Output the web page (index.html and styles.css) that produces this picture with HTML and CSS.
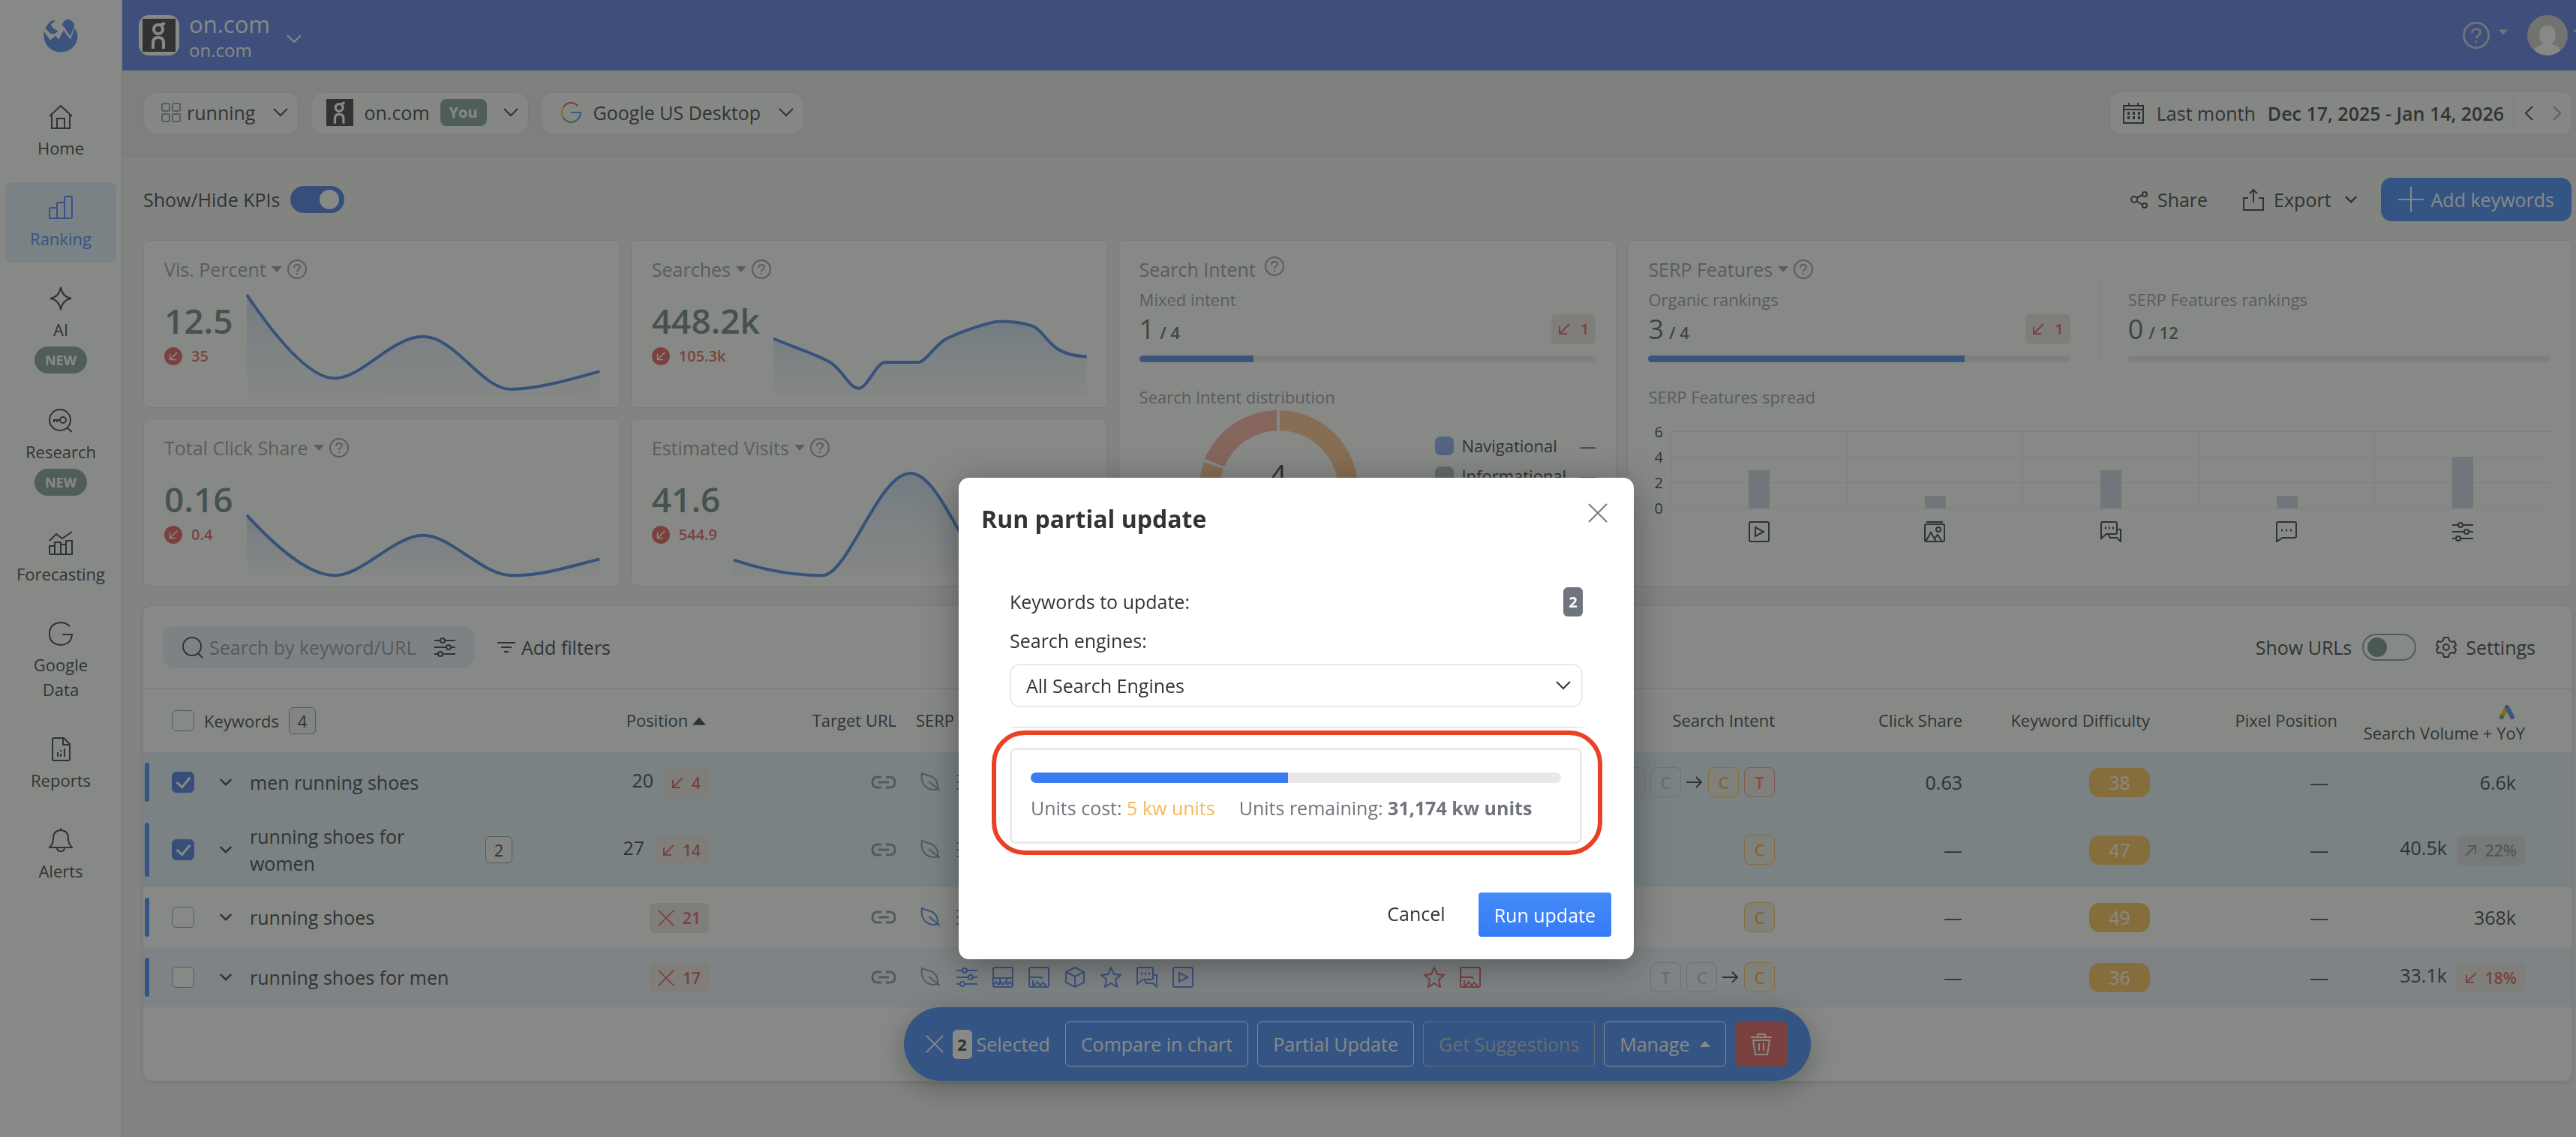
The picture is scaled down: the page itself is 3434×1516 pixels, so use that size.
FILE: index.html
```html
<!DOCTYPE html>
<html lang="en">
<head>
    <meta charset="UTF-8">
    <meta name="viewport" content="width=device-width, initial-scale=1.0">
    <title>Ranking - on.com</title>
    <link rel="stylesheet" href="styles.css">
</head>
<body>
    <!-- icon set -->
    <svg class="sprite" aria-hidden="true">
        <defs>
            <linearGradient id="fade" x1="0" y1="0" x2="0" y2="1">
                <stop offset="0" stop-color="#a9c8e8" stop-opacity="0.6"/>
                <stop offset="1" stop-color="#e4e4ee" stop-opacity="0.2"/>
            </linearGradient>
        </defs>
        <symbol id="i-home" viewBox="0 0 32 32"><path d="M1 15 16 1l15 14M4 13v18h24V13M11 31V18h10v13"/></symbol>
        <symbol id="i-bars" viewBox="0 0 32 32"><path d="M1 30V18q0-2 2-2h8v14zM11 30V11q0-2 2-2h8v21zM21 30V3q0-2 2-2h6q2 0 2 2v25q0 2-2 2zM1 30h22"/></symbol>
        <symbol id="i-spark" viewBox="0 0 32 32"><path d="M16 1Q18 14 30 16 18 18 16 31 14 18 2 16 14 14 16 1z"/></symbol>
        <symbol id="i-research" viewBox="0 0 32 32"><circle cx="15" cy="15" r="14"/><path d="M24 25l7 6M6 15h9M7 15v3M11 15v3"/><circle cx="19" cy="15" r="4"/></symbol>
        <symbol id="i-forecast" viewBox="0 0 32 32"><path d="M1 13 10 4l8 6L31 1M1 31V20h7v11M8 31V15h8v16M16 31V18h7v13M23 31V13h8v18zM1 31h30"/></symbol>
        <symbol id="i-g" viewBox="0 0 32 32"><path d="M28 6Q23 1 16 1 1 2 1 16t15 15q14-1 15-14H18"/></symbol>
        <symbol id="i-report" viewBox="0 0 32 32"><path d="M5 3q0-2 2-2h13l8 8v20q0 2-2 2H7q-2 0-2-2zM19 1v9h9M12 26v-6M16 26v-4M16 19v-2M21 26V15"/></symbol>
        <symbol id="i-bell" viewBox="0 0 32 32"><path d="M1 26q5-5 5-12Q6 3 16 3t10 11q0 7 5 12zM16 3V0M11 26q0 5 5 5t5-5"/></symbol>
        <symbol id="i-down" viewBox="0 0 20 12"><path d="M1 1l9 9 9-9"/></symbol>
        <symbol id="i-caret" viewBox="0 0 14 8"><path d="M0 0h14L7 8z" fill="currentColor" stroke="none"/></symbol>
        <symbol id="i-up" viewBox="0 0 14 8"><path d="M0 8h14L7 0z" fill="currentColor" stroke="none"/></symbol>
        <symbol id="i-help" viewBox="0 0 26 26"><circle cx="13" cy="13" r="12"/><path d="M9 11q0-4 4-4t4 3q0 2-3 4-1 1-1 2M13 18v2"/></symbol>
        <symbol id="i-grid" viewBox="0 0 26 26"><rect x="1" y="1" width="10" height="10" rx="2"/><rect x="15" y="1" width="10" height="10" rx="2"/><rect x="1" y="15" width="10" height="10" rx="2"/><rect x="15" y="15" width="10" height="10" rx="2"/></symbol>
        <symbol id="i-on" viewBox="0 0 44 44"><rect width="44" height="44" fill="#333" stroke="none"/><circle cx="21" cy="14" r="6" stroke-width="4"/><path d="M24 8q4 0 5-3M14 40v-8q0-7 7-7t7 7v8" stroke-width="4"/></symbol>
        <symbol id="i-calendar" viewBox="0 0 30 30"><path d="M2 5h26v23H2zM2 10h26M9 1v5M21 1v5"/><path d="M7 15h3M14 15h3M21 15h3M7 21h3M14 21h3M21 21h3" stroke-width="4"/></symbol>
        <symbol id="i-prev" viewBox="0 0 12 20"><path d="M11 1l-9 9 9 9"/></symbol>
        <symbol id="i-next" viewBox="0 0 12 20"><path d="M1 1l9 9-9 9"/></symbol>
        <symbol id="i-share" viewBox="0 0 24 24"><circle cx="5" cy="12" r="4"/><circle cx="19" cy="5" r="3"/><circle cx="19" cy="20" r="3"/><path d="M8 10l8-4M8 14l8 5"/></symbol>
        <symbol id="i-export" viewBox="0 0 30 30"><path d="M8 13H2v16h26V13h-6M15 19V2M10 7l5-5 5 5"/></symbol>
        <symbol id="i-plus" viewBox="0 0 34 34"><path d="M17 0v34M0 17h34"/></symbol>
        <symbol id="i-search" viewBox="0 0 28 28"><circle cx="13" cy="13" r="12"/><path d="M21 22l6 6"/></symbol>
        <symbol id="i-sliders" viewBox="0 0 28 28"><path d="M0 5h8M14 5h14M0 14h16M22 14h6M0 23h5M11 23h17"/><circle cx="11" cy="5" r="3"/><circle cx="19" cy="14" r="3"/><circle cx="8" cy="23" r="3"/></symbol>
        <symbol id="i-filter" viewBox="0 0 24 16"><path d="M0 2h24M5 8h14M9 14h6"/></symbol>
        <symbol id="i-gear" viewBox="0 0 28 28"><path d="M11 1h6l1 4 3 2 4-1 2 5-3 3 3 3-2 5-4-1-3 2-1 4h-6l-1-4-3-2-4 1-2-5 3-3-3-3 2-5 4 1 3-2z"/><circle cx="14" cy="14" r="4"/></symbol>
        <symbol id="i-downleft" viewBox="0 0 16 16"><path d="M15 1L3 13M2 4v10h10"/></symbol>
        <symbol id="i-upright" viewBox="0 0 16 16"><path d="M1 15L13 3M4 2h10v10"/></symbol>
        <symbol id="i-x" viewBox="0 0 26 26"><path d="M1 1l24 24M25 1L1 25"/></symbol>
        <symbol id="i-arrow" viewBox="0 0 22 18"><path d="M0 9h20M13 2l7 7-7 7"/></symbol>
        <symbol id="i-link" viewBox="0 0 34 18"><path d="M14 2H9Q2 2 2 9t7 7h5M20 2h5q7 0 7 7t-7 7h-5M10 9h14"/></symbol>
        <symbol id="i-leaf" viewBox="0 0 28 28"><path d="M2 2q4 2 12 4 10 4 9 17-10 3-17-4Q0 12 2 2zM11 13l15 12"/></symbol>
        <symbol id="i-images" viewBox="0 0 28 28"><rect x="1" y="1" width="26" height="26" rx="2"/><path d="M1 15h26M10 15v9M19 15v9M2 24l3-4 3 4 3-4 3 4 3-4 3 4 3-4 3 4"/></symbol>
        <symbol id="i-thumb" viewBox="0 0 28 28"><rect x="1" y="1" width="26" height="26" rx="2"/><path d="M1 14h15q2 0 2 2M6 26v-8M7 26l5-6 4 5 3-4 5 5"/></symbol>
        <symbol id="i-box" viewBox="0 0 28 28"><path d="M14 1l12 6v14l-12 6-12-6V7zM2 7l12 6 12-6M14 13v14"/></symbol>
        <symbol id="i-star" viewBox="0 0 28 28"><path d="M14 1l4 9 9 1-7 6 2 10-8-5-8 5 2-10-7-6 9-1z"/></symbol>
        <symbol id="i-chats" viewBox="0 0 28 28"><path d="M1 3q0-2 2-2h17q2 0 2 2v12q0 2-2 2H8l-7 6zM22 11h5v16l-5-5h-9l-2-4"/><path d="M6 9h2M11 9h2M16 9h2" stroke-width="3"/></symbol>
        <symbol id="i-chat" viewBox="0 0 28 28"><path d="M1 3q0-2 2-2h22q2 0 2 2v17q0 2-2 2H9l-8 5z"/><path d="M7 12h2M13 12h2M19 12h2" stroke-width="3"/></symbol>
        <symbol id="i-play" viewBox="0 0 28 28"><rect x="1" y="1" width="26" height="26" rx="2"/><path d="M9 8v12l11-6z"/></symbol>
        <symbol id="i-photo" viewBox="0 0 28 28"><rect x="1" y="4" width="26" height="23" rx="2"/><path d="M3 1h22M2 27l7-12 7 12M14 23l4-5 6 9"/><circle cx="19" cy="11" r="3"/></symbol>
        <symbol id="i-trash" viewBox="0 0 28 30"><path d="M0 6h28M9 6V2h10v4M3 10l3 19h16l3-19zM11 14v10M17 14v10"/></symbol>
    </svg>

    <div class="app">
        <nav class="sidebar">
            <a href="#" class="logo" aria-label="Home">
                <svg width="46" height="46" viewBox="0 0 46 46"><path d="M0 16l4 6 5 7 7-6 4 5 7-13 4 7 5 6 5-16q5 6 5 12a23 22 0 0 1-46 0z"/><path d="M24 10q2-7 8-9 8 2 10 9l-6 15-4-5-5-8zM2 14Q5 6 13 2l3 2-6 5 4 5 6 3-4 4-6 1z"/></svg>
            </a>
            <a href="#" class="side-item"><svg><use href="#i-home"/></svg>Home</a>
            <a href="#" class="side-item active"><svg><use href="#i-bars"/></svg>Ranking</a>
            <a href="#" class="side-item"><svg><use href="#i-spark"/></svg>AI<span class="new">NEW</span></a>
            <a href="#" class="side-item"><svg><use href="#i-research"/></svg>Research<span class="new">NEW</span></a>
            <a href="#" class="side-item"><svg><use href="#i-forecast"/></svg>Forecasting</a>
            <a href="#" class="side-item"><svg><use href="#i-g"/></svg>Google<br>Data</a>
            <a href="#" class="side-item"><svg><use href="#i-report"/></svg>Reports</a>
            <a href="#" class="side-item"><svg><use href="#i-bell"/></svg>Alerts</a>
        </nav>

        <div class="page">
            <header class="topbar">
                <span class="site-logo"><svg width="44" height="44"><use href="#i-on"/></svg></span>
                <div class="site">
                    <div class="site-name">on.com</div>
                    <div class="site-url">on.com</div>
                </div>
                <svg class="chev"><use href="#i-down"/></svg>
                <div class="account">
                    <svg width="36" height="36"><use href="#i-help"/></svg>
                    <svg class="caret"><use href="#i-caret"/></svg>
                    <svg class="avatar" viewBox="0 0 54 54"><circle cx="27" cy="27" r="27" fill="#ccc8c8"/><path d="M27 14c14 0 13 20 5 25 8 2 11 4 12 8-10 9-24 9-34 0 1-4 4-6 12-8-8-5-9-25 5-25z" fill="#fff"/></svg>
                    <svg class="caret"><use href="#i-caret"/></svg>
                </div>
            </header>

            <div class="filterbar">
                <button class="pill"><svg class="muted" width="26" height="26"><use href="#i-grid"/></svg><span class="group">running</span><svg class="chev"><use href="#i-down"/></svg></button>
                <button class="pill domain"><svg class="white" width="36" height="36"><use href="#i-on"/></svg><span>on.com</span><span class="you">You</span><svg class="chev"><use href="#i-down"/></svg></button>
                <button class="pill engine"><svg width="32" height="32" viewBox="0 0 32 32" stroke-width="6"><path d="M6 9Q10 3 16 3q5 0 9 4" stroke="#ea4335"/><path d="M6 9q-4 7 0 14" stroke="#fbbc05"/><path d="M6 23q4 6 10 6 5 0 8-3" stroke="#34a853"/><path d="M16 16h13q0 6-5 10" stroke="#4285f4"/></svg><span>Google US Desktop</span><svg class="chev"><use href="#i-down"/></svg></button>
                <div class="dates">
                    <button class="range"><svg width="30" height="30"><use href="#i-calendar"/></svg><span>Last month</span><b>Dec 17, 2025 - Jan 14, 2026</b></button>
                    <button class="step" aria-label="Previous"><svg width="12" height="20"><use href="#i-prev"/></svg></button>
                    <button class="step muted" aria-label="Next"><svg width="12" height="20"><use href="#i-next"/></svg></button>
                </div>
            </div>

            <main>
                <div class="toolbar">
                    <label for="kpis">Show/Hide KPIs</label>
                    <input type="checkbox" class="switch" id="kpis" checked>
                    <div class="actions">
                        <button class="plain"><svg width="24" height="24"><use href="#i-share"/></svg>Share</button>
                        <button class="plain"><svg width="30" height="30"><use href="#i-export"/></svg>Export<svg class="chev small"><use href="#i-down"/></svg></button>
                        <button class="add"><svg width="34" height="34"><use href="#i-plus"/></svg>Add keywords</button>
                    </div>
                </div>

                <section class="kpis">
                    <article class="card kpi">
                        <h2>Vis. Percent <svg class="caret"><use href="#i-caret"/></svg><svg class="help"><use href="#i-help"/></svg></h2>
                        <div class="kpi-body">
                            <div><div class="value">12.5</div><div class="trend"><i><svg><use href="#i-downleft"/></svg></i>35</div></div>
                            <svg class="spark" viewBox="0 0 1050 412" preserveAspectRatio="none">
                                <path class="area" d="M0 0C70 140 180 335 262 335S430 168 525 168 700 379 785 379C860 379 950 345 1050 307V412H0z"/>
                                <path class="line" d="M0 0C70 140 180 335 262 335S430 168 525 168 700 379 785 379C860 379 950 345 1050 307"/>
                            </svg>
                        </div>
                    </article>
                    <article class="card kpi">
                        <h2>Searches <svg class="caret"><use href="#i-caret"/></svg><svg class="help"><use href="#i-help"/></svg></h2>
                        <div class="kpi-body">
                            <div><div class="value">448.2k</div><div class="trend"><i><svg><use href="#i-downleft"/></svg></i>105.3k</div></div>
                            <svg class="spark" viewBox="0 0 932 412" preserveAspectRatio="none">
                                <path class="area" d="M0 176C70 215 130 240 168 270S225 375 253 375 305 271 333 271H433C455 265 480 205 508 182S640 107 678 107 750 115 773 127 815 190 843 215 900 245 932 248V412H0z"/>
                                <path class="line" d="M0 176C70 215 130 240 168 270S225 375 253 375 305 271 333 271H433C455 265 480 205 508 182S640 107 678 107 750 115 773 127 815 190 843 215 900 245 932 248"/>
                            </svg>
                        </div>
                    </article>
                    <article class="card kpi">
                        <h2>Total Click Share <svg class="caret"><use href="#i-caret"/></svg><svg class="help"><use href="#i-help"/></svg></h2>
                        <div class="kpi-body">
                            <div><div class="value">0.16</div><div class="trend"><i><svg><use href="#i-downleft"/></svg></i>0.4</div></div>
                            <svg class="spark" viewBox="0 0 1050 412" preserveAspectRatio="none">
                                <path class="area" d="M0 168C80 285 180 410 262 410S440 249 525 249 700 410 790 410 960 375 1050 344V412H0z"/>
                                <path class="line" d="M0 168C80 285 180 410 262 410S440 249 525 249 700 410 790 410 960 375 1050 344"/>
                            </svg>
                        </div>
                    </article>
                    <article class="card kpi">
                        <h2>Estimated Visits <svg class="caret"><use href="#i-caret"/></svg><svg class="help"><use href="#i-help"/></svg></h2>
                        <div class="kpi-body">
                            <div><div class="value">41.6</div><div class="trend"><i><svg><use href="#i-downleft"/></svg></i>544.9</div></div>
                            <svg class="spark" viewBox="0 0 1050 412" preserveAspectRatio="none">
                                <path class="area" d="M0 348Q140 410 262 410C340 415 430 0 526 0S700 410 790 410 960 375 1050 360V412H0z"/>
                                <path class="line" d="M0 348Q140 410 262 410C340 415 430 0 526 0S700 410 790 410 960 375 1050 360"/>
                            </svg>
                        </div>
                    </article>

                    <article class="card tall intent">
                        <h2>Search Intent <svg class="help"><use href="#i-help"/></svg></h2>
                        <h3>Mixed intent</h3>
                        <div class="ratio"><span>1</span> / 4<span class="delta"><svg><use href="#i-downleft"/></svg>1</span></div>
                        <div class="bar"><div style="width: 25%"></div></div>
                        <h3 class="second">Search Intent distribution</h3>
                        <div class="distribution">
                            <svg class="donut" width="214" height="214" viewBox="0 0 214 214">
                                <path d="M109 1A106 106 0 1 1 8 70L34 79A79 79 0 1 0 109 28z" fill="#fcbf85"/>
                                <path d="M105 1v27A79 79 0 0 0 35 76L9 66A106 106 0 0 1 105 1z" fill="#fbaa98"/>
                                <text x="107" y="103" text-anchor="middle">4</text>
                            </svg>
                            <ul class="legend">
                                <li><i class="nav"></i>Navigational<span>—</span></li>
                                <li><i class="info"></i>Informational<span>—</span></li>
                                <li><i class="com"></i>Commercial<span>4</span></li>
                                <li><i class="tra"></i>Transactional<span>1</span></li>
                            </ul>
                        </div>
                    </article>

                    <article class="card tall serp">
                        <h2>SERP Features <svg class="caret"><use href="#i-caret"/></svg><svg class="help"><use href="#i-help"/></svg></h2>
                        <div class="rankings">
                            <div>
                                <h3>Organic rankings</h3>
                                <div class="ratio"><span>3</span> / 4<span class="delta"><svg><use href="#i-downleft"/></svg>1</span></div>
                                <div class="bar"><div style="width: 75%"></div></div>
                            </div>
                            <div>
                                <h3>SERP Features rankings</h3>
                                <div class="ratio"><span>0</span> / 12</div>
                                <div class="bar"></div>
                            </div>
                        </div>
                        <h3 class="second">SERP Features spread</h3>
                        <div class="chart">
                            <div class="y-axis"><span>6</span><span>4</span><span>2</span><span>0</span></div>
                            <div class="plot">
                                <div><i style="height: 50%"></i></div>
                                <div><i style="height: 17%"></i></div>
                                <div><i style="height: 50%"></i></div>
                                <div><i style="height: 17%"></i></div>
                                <div><i style="height: 67%"></i></div>
                            </div>
                            <div class="x-axis">
                                <svg><use href="#i-play"/></svg>
                                <svg><use href="#i-photo"/></svg>
                                <svg><use href="#i-chats"/></svg>
                                <svg><use href="#i-chat"/></svg>
                                <svg><use href="#i-sliders"/></svg>
                            </div>
                        </div>
                    </article>
                </section>

                <section class="keywords">
                    <div class="table-tools">
                        <div class="search">
                            <svg><use href="#i-search"/></svg>
                            <input type="text" placeholder="Search by keyword/URL" aria-label="Search by keyword/URL">
                            <svg><use href="#i-sliders"/></svg>
                        </div>
                        <button class="plain filters"><svg width="24" height="16"><use href="#i-filter"/></svg>Add filters</button>
                        <div class="table-options">
                            <label for="urls">Show URLs</label>
                            <input type="checkbox" class="switch" id="urls">
                            <button class="plain settings"><svg width="28" height="28"><use href="#i-gear"/></svg>Settings</button>
                        </div>
                    </div>

                    <table>
                        <colgroup>
                            <col class="c-key"><col class="c-num"><col class="c-num"><col><col class="c-num"><col class="c-num"><col class="c-num"><col class="c-num"><col class="c-num"><col class="c-num"><col class="c-end">
                        </colgroup>
                        <thead>
                            <tr>
                                <th class="key"><div><input type="checkbox" class="tick" aria-label="Select all">Keywords<span class="count">4</span></div></th>
                                <th>Position <svg class="sort"><use href="#i-up"/></svg></th>
                                <th>Target URL</th>
                                <th class="left">SERP Features</th>
                                <th></th>
                                <th>Search Intent</th>
                                <th>Click Share</th>
                                <th>Keyword Difficulty</th>
                                <th>Pixel Position</th>
                                <th class="volume"><svg width="22" height="20" viewBox="0 0 22 20"><path d="M11 3L4 16" stroke="#fbbc04" stroke-width="6"/><path d="M11 3l7 13" stroke="#4a80f0" stroke-width="6" stroke-linecap="round"/><circle cx="4" cy="16" r="3" fill="#4d9a73" stroke="none"/></svg><br>Search Volume + YoY</th>
                                <th></th>
                            </tr>
                        </thead>
                        <tbody>
                            <tr class="selected">
                                <td class="key"><div><input type="checkbox" class="tick" aria-label="men running shoes" checked><svg class="chev small"><use href="#i-down"/></svg><span class="name">men running shoes</span></div></td>
                                <td>20<span class="delta"><svg><use href="#i-downleft"/></svg>4</span></td>
                                <td><svg class="link"><use href="#i-link"/></svg></td>
                                <td><div class="icons"><svg class="muted"><use href="#i-leaf"/></svg><svg><use href="#i-sliders"/></svg><svg><use href="#i-images"/></svg><svg><use href="#i-box"/></svg></div></td>
                                <td></td>
                                <td><div class="chips"><i>T</i><i>C</i><svg><use href="#i-arrow"/></svg><i class="c">C</i><i class="t">T</i></div></td>
                                <td>0.63</td>
                                <td><span class="kd">38</span></td>
                                <td class="dash">—</td>
                                <td class="vol">6.6k</td>
                                <td></td>
                            </tr>
                            <tr class="selected tall-row">
                                <td class="key"><div><input type="checkbox" class="tick" aria-label="running shoes for women" checked><svg class="chev small"><use href="#i-down"/></svg><span class="name">running shoes for women</span><span class="count">2</span></div></td>
                                <td>27<span class="delta"><svg><use href="#i-downleft"/></svg>14</span></td>
                                <td><svg class="link"><use href="#i-link"/></svg></td>
                                <td><div class="icons"><svg class="muted"><use href="#i-leaf"/></svg><svg><use href="#i-sliders"/></svg><svg><use href="#i-images"/></svg><svg><use href="#i-box"/></svg></div></td>
                                <td></td>
                                <td><div class="chips"><i class="c">C</i></div></td>
                                <td>—</td>
                                <td><span class="kd">47</span></td>
                                <td class="dash">—</td>
                                <td>40.5k<span class="delta up"><svg><use href="#i-upright"/></svg>22%</span></td>
                                <td></td>
                            </tr>
                            <tr>
                                <td class="key"><div><input type="checkbox" class="tick" aria-label="running shoes"><svg class="chev small"><use href="#i-down"/></svg><span class="name">running shoes</span></div></td>
                                <td><span class="delta lost"><svg><use href="#i-x"/></svg>21</span></td>
                                <td><svg class="link"><use href="#i-link"/></svg></td>
                                <td><div class="icons"><svg><use href="#i-leaf"/></svg><svg><use href="#i-sliders"/></svg><svg><use href="#i-images"/></svg><svg><use href="#i-box"/></svg></div></td>
                                <td></td>
                                <td><div class="chips"><i class="c">C</i></div></td>
                                <td>—</td>
                                <td><span class="kd">49</span></td>
                                <td class="dash">—</td>
                                <td class="vol">368k</td>
                                <td></td>
                            </tr>
                            <tr class="even">
                                <td class="key"><div><input type="checkbox" class="tick" aria-label="running shoes for men"><svg class="chev small"><use href="#i-down"/></svg><span class="name">running shoes for men</span></div></td>
                                <td><span class="delta lost"><svg><use href="#i-x"/></svg>17</span></td>
                                <td><svg class="link"><use href="#i-link"/></svg></td>
                                <td><div class="icons"><svg class="muted"><use href="#i-leaf"/></svg><svg><use href="#i-sliders"/></svg><svg><use href="#i-images"/></svg><svg><use href="#i-thumb"/></svg><svg><use href="#i-box"/></svg><svg><use href="#i-star"/></svg><svg><use href="#i-chats"/></svg><svg><use href="#i-play"/></svg></div></td>
                                <td><div class="icons red"><svg><use href="#i-star"/></svg><svg><use href="#i-thumb"/></svg></div></td>
                                <td><div class="chips"><i>T</i><i>C</i><svg><use href="#i-arrow"/></svg><i class="c">C</i></div></td>
                                <td>—</td>
                                <td><span class="kd">36</span></td>
                                <td class="dash">—</td>
                                <td>33.1k<span class="delta"><svg><use href="#i-downleft"/></svg>18%</span></td>
                                <td></td>
                            </tr>
                        </tbody>
                    </table>

                    <div class="bulk">
                        <button class="clear" aria-label="Clear selection"><svg width="24" height="24"><use href="#i-x"/></svg></button>
                        <span class="picked">2</span>
                        <span class="label">Selected</span>
                        <button>Compare in chart</button>
                        <button>Partial Update</button>
                        <button class="off" disabled>Get Suggestions</button>
                        <button>Manage <svg class="caret"><use href="#i-up"/></svg></button>
                        <button class="trash" aria-label="Delete"><svg width="28" height="30"><use href="#i-trash"/></svg></button>
                    </div>
                </section>
            </main>
        </div>
    </div>

    <div class="overlay">
        <div class="modal" role="dialog" aria-labelledby="modal-title">
            <div class="modal-head">
                <h1 id="modal-title">Run partial update</h1>
                <button class="close" aria-label="Close"><svg width="26" height="26"><use href="#i-x"/></svg></button>
            </div>
            <div class="modal-body">
                <div class="field">Keywords to update:<span class="num">2</span></div>
                <label class="field" for="engines">Search engines:</label>
                <div class="select">
                    <select id="engines"><option>All Search Engines</option></select>
                    <svg class="chev"><use href="#i-down"/></svg>
                </div>
            </div>
            <div class="highlight">
                <div class="units">
                    <div class="progress"><div style="width: 48.5%"></div></div>
                    <div class="units-text">
                        <span>Units cost: <em>5 kw units</em></span>
                        <span>Units remaining: <b>31,174 kw units</b></span>
                    </div>
                </div>
            </div>
            <div class="modal-foot">
                <button class="cancel">Cancel</button>
                <button class="run">Run update</button>
            </div>
        </div>
    </div>
</body>
</html>
```

FILE: styles.css
```css
:root {
    --blue: #3b82f6;
    --text: #313337;
    --muted: #9494a0;
    --green: #647d76;
    --badge: #7b9a92;
    --red: #df5555;
    --amber: #fcbc4c;
    --line: #dcdde0;
}

* {
    box-sizing: border-box;
}

body {
    margin: 0;
    background: #f3f3f3;
    color: var(--text);
    font-family: "Open Sans", "Noto Sans", sans-serif;
    font-size: 25px;
    line-height: 36px;
}

h1, h2, h3, ul {
    margin: 0;
    padding: 0;
    list-style: none;
}

a {
    color: inherit;
    text-decoration: none;
}

button, input, select {
    font: inherit;
    color: inherit;
    margin: 0;
}

button {
    display: flex;
    align-items: center;
    border: none;
    background: none;
    padding: 0;
    white-space: nowrap;
}

svg {
    display: block;
    flex-shrink: 0;
    fill: none;
    stroke: currentColor;
    stroke-width: 2;
}

.sprite {
    position: absolute;
    width: 0;
    height: 0;
}

.chev {
    width: 20px;
    height: 12px;
}

.chev.small {
    width: 16px;
    height: 12px;
    stroke-width: 3;
}

.caret {
    width: 14px;
    height: 8px;
}

.muted {
    color: #8f9aa0;
}

.white {
    color: #fff;
}

.app {
    display: flex;
    min-height: 100vh;
}

/* sidebar */
.sidebar {
    width: 163px;
    flex-shrink: 0;
    padding: 24px 7px;
    background: #fff;
    border-right: 1px solid var(--line);
}

.logo {
    display: flex;
    justify-content: center;
    height: 98px;
    color: #4a80e8;
}

.logo svg {
    fill: currentColor;
    stroke: #fff;
    stroke-width: 1;
}

.side-item {
    display: flex;
    flex-direction: column;
    align-items: center;
    margin-bottom: 14px;
    padding: 18px 0 15px;
    border-radius: 8px;
    font-size: 22px;
    line-height: 33px;
    text-align: center;
}

.side-item svg {
    width: 32px;
    height: 32px;
    margin-bottom: 9px;
}

.side-item.active {
    background: #dfeffa;
    color: var(--blue);
}

.new {
    margin-top: 6px;
    padding: 0 14px;
    border-radius: 18px;
    background: var(--badge);
    color: #fff;
    font-size: 18px;
    font-weight: 700;
    line-height: 36px;
}

.page {
    flex: 1;
    min-width: 0;
}

/* top bar */
.topbar {
    display: flex;
    align-items: center;
    height: 94px;
    padding-left: 22px;
    overflow: hidden;
    background: #4f76e0;
    color: #fff;
}

.site-logo {
    display: flex;
    align-items: center;
    justify-content: center;
    width: 54px;
    height: 54px;
    margin-right: 13px;
    border-radius: 14px;
    background: #fff;
}

.site {
    margin-right: 22px;
    padding-top: 4px;
}

.site-name {
    font-size: 31px;
    line-height: 36px;
}

.site-url {
    font-size: 24px;
    line-height: 34px;
}

.topbar > .chev {
    margin-top: 10px;
}

.account {
    display: flex;
    align-items: center;
    margin-left: auto;
    margin-right: -8px;
    color: #c9cfdc;
}

.account .caret {
    width: 12px;
    margin: 0 26px 8px 12px;
}

.account .avatar {
    width: 54px;
    height: 54px;
    stroke: none;
}

.account .avatar + .caret {
    margin: 0 0 8px 7px;
}

/* filter bar */
.filterbar {
    display: flex;
    align-items: center;
    gap: 16px;
    height: 116px;
    padding: 0 5px 2px 28px;
    background: #e9e9e9;
    border-bottom: 1px solid #dedede;
}

.pill {
    height: 56px;
    padding: 0 13px 2px 23px;
    border: 1px solid #dedfe0;
    border-radius: 16px;
    background: #fbfbfb;
    font-weight: 500;
}

.pill .chev {
    margin-left: 24px;
}

.group {
    margin-left: 8px;
}

.domain {
    padding-left: 20px;
    gap: 14px;
}

.domain .chev {
    margin-left: 8px;
}

.engine span {
    margin-left: 14px;
}

.you {
    padding: 0 12px;
    border-radius: 8px;
    background: var(--badge);
    color: #fff;
    font-size: 20px;
    font-weight: 700;
}

.dates {
    display: flex;
    margin-left: auto;
    height: 58px;
    border: 1px solid #dedfe0;
    border-radius: 14px;
    background: #fbfbfb;
}

.range {
    padding: 0 13px 0 16px;
    border-right: 1px solid #dedfe0;
    gap: 16px;
}

.range b {
    font-weight: 600;
}

.step {
    width: 38px;
    justify-content: center;
}

/* content */
main {
    padding: 28px 6px 0 28px;
}

.toolbar {
    display: flex;
    align-items: center;
    height: 56px;
    margin-bottom: 26px;
}

.switch {
    appearance: none;
    width: 72px;
    height: 36px;
    margin-left: 14px;
    padding: 5px;
    border: 2px solid #7d9590;
    border-radius: 18px;
}

.switch::before {
    content: "";
    display: block;
    width: 26px;
    height: 26px;
    margin-top: -2px;
    border-radius: 50%;
    background: #6f8a86;
}

.switch:checked {
    border-color: #3f74dd;
    background: #3f74dd;
}

.switch:checked::before {
    margin-left: 32px;
    background: #fff;
}

.actions {
    display: flex;
    align-items: center;
    margin-left: auto;
}

.plain {
    gap: 12px;
    margin-right: 46px;
}

.plain + .plain {
    margin-right: 32px;
}

.plain .chev {
    margin-left: 6px;
}

.add {
    height: 58px;
    padding: 0 23px;
    gap: 10px;
    border-radius: 14px;
    background: var(--blue);
    color: #fff;
}

/* kpi cards */
.kpis {
    display: grid;
    grid-template-columns: 636fr 636fr 665fr 1259fr;
    grid-template-rows: 224px 224px;
    gap: 14px;
}

.card {
    border: 1px solid var(--line);
    border-radius: 8px;
    background: #fff;
    padding: 19px 27px 12px;
}

.kpi:nth-child(3) {
    grid-area: 2 / 1;
}

.kpi:nth-child(4) {
    grid-area: 2 / 2;
}

.intent {
    grid-area: 1 / 3 / 3;
}

.serp {
    grid-area: 1 / 4 / 3;
}

h2 {
    display: flex;
    align-items: center;
    color: var(--muted);
    font-size: 25px;
    font-weight: 500;
    line-height: 38px;
}

h2 .caret {
    margin: 0 7px;
}

h2 .help {
    width: 26px;
    height: 26px;
}

.intent h2 .help {
    margin: 0 0 8px 12px;
}

h3 {
    margin-top: 6px;
    color: var(--muted);
    font-size: 22px;
    font-weight: 500;
    line-height: 30px;
}

h3.second {
    margin-top: 31px;
}

.kpi-body {
    display: flex;
    gap: 18px;
}

.value {
    margin-top: 23px;
    color: var(--green);
    font-size: 46px;
    font-weight: 600;
    line-height: 52px;
}

.trend {
    display: flex;
    align-items: center;
    gap: 12px;
    margin-top: 10px;
    color: var(--red);
    font-size: 20px;
    font-weight: 600;
    line-height: 24px;
}

.trend i {
    padding: 6px;
    border-radius: 50%;
    background: var(--red);
    color: #fff;
}

.trend svg {
    width: 12px;
    height: 12px;
}

.spark {
    flex: 1;
    width: 0;
    height: 137px;
    margin-top: 15px;
    overflow: visible;
}

.spark .line {
    stroke: #3f7ae0;
    stroke-width: 4;
    vector-effect: non-scaling-stroke;
}

.spark .area {
    fill: url(#fade);
    stroke: none;
}

.ratio {
    display: flex;
    align-items: baseline;
    gap: 7px;
    height: 44px;
    margin-top: 3px;
    color: #4f635b;
    font-size: 22px;
    font-weight: 600;
    line-height: 44px;
}

.ratio > span:first-child {
    font-size: 36px;
    font-weight: 400;
}

.delta {
    display: inline-flex;
    align-items: center;
    gap: 11px;
    margin-left: 13px;
    padding: 0 11px;
    border-radius: 6px;
    background: #ede4e2;
    color: var(--red);
    font-size: 21px;
    font-weight: 600;
    line-height: 40px;
    vertical-align: middle;
}

.delta svg {
    width: 16px;
    height: 16px;
}

.delta.lost svg {
    width: 22px;
    height: 22px;
}

.delta.up {
    background: #dcdce0;
    color: #7d908c;
}

.ratio .delta {
    align-self: center;
    margin-left: auto;
    font-size: 20px;
    gap: 14px;
    padding: 0 9px;
}

.bar {
    height: 9px;
    margin-top: 13px;
    overflow: hidden;
    border-radius: 5px;
    background: #e9e9e9;
}

.bar div {
    height: 100%;
    background: #4a84e8;
}

.distribution {
    display: flex;
    justify-content: space-between;
    padding-left: 78px;
}

.donut {
    margin-top: 2px;
    stroke: none;
}

.donut text {
    fill: var(--text);
    font-size: 40px;
}

.legend {
    width: 214px;
    margin-top: 30px;
    font-size: 22px;
    line-height: 40px;
}

.legend li {
    display: flex;
    align-items: center;
}

.legend i {
    width: 25px;
    height: 25px;
    margin-right: 10px;
    border-radius: 7px;
    background: #85a9f5;
}

.legend .info {
    background: #aab8b4;
}

.legend .com {
    background: #fcbf85;
}

.legend .tra {
    background: #fbaa98;
}

.legend span {
    margin-left: auto;
}

.rankings {
    display: grid;
    grid-template-columns: 1fr 1fr;
}

.rankings > div:first-child {
    padding-right: 38px;
    border-right: 1px solid var(--line);
}

.rankings > div:last-child {
    padding-left: 38px;
}

/* bar chart of serp features */
.chart {
    display: grid;
    grid-template-columns: 30px 1fr;
    margin-top: 15px;
}

.y-axis {
    display: flex;
    flex-direction: column;
    padding-left: 8px;
    font-size: 20px;
    font-weight: 500;
    line-height: 34px;
}

.plot {
    display: grid;
    grid-template-columns: repeat(5, 1fr);
    height: 103px;
    margin-top: 16px;
    background: repeating-linear-gradient(to bottom, #eaeaec 0 1px, transparent 1px 34px);
}

.plot div {
    display: flex;
    align-items: flex-end;
    justify-content: center;
    border-left: 1px solid #eaeaec;
}

.plot i {
    width: 28px;
    background: #ccd2e2;
}

.x-axis {
    display: grid;
    grid-column: 2;
    grid-template-columns: repeat(5, 1fr);
    justify-items: center;
}

.x-axis svg {
    width: 28px;
    height: 28px;
}

/* keyword table */
.keywords {
    margin-top: 26px;
    border-radius: 10px;
    background: #fff;
    box-shadow: 0 2px 8px rgba(0, 0, 0, 0.15);
}

.table-tools {
    display: flex;
    align-items: center;
    height: 111px;
    padding: 0 48px 0 26px;
    border-bottom: 2px solid #e9eaec;
}

.search {
    display: flex;
    align-items: center;
    width: 416px;
    height: 56px;
    padding: 0 26px;
    border-radius: 16px;
    background: #e9effa;
}

.search svg {
    width: 28px;
    height: 28px;
}

.search input {
    flex: 1;
    min-width: 0;
    padding: 0 0 0 8px;
    border: none;
    background: none;
    outline: none;
}

.search input::placeholder {
    color: #84928f;
    opacity: 1;
}

.filters {
    gap: 8px;
    margin-left: 30px;
}

.table-options {
    display: flex;
    align-items: center;
    margin-left: auto;
}

.settings {
    margin: 0 0 0 26px;
}

table {
    width: 100%;
    table-layout: fixed;
    border-collapse: collapse;
}

.c-key {
    width: 517px;
}

.c-num {
    width: 250px;
}

.c-end {
    width: 49px;
}

th {
    height: 84px;
    padding: 0 13px 2px;
    font-size: 22px;
    font-weight: 500;
    line-height: 32px;
    text-align: right;
    white-space: nowrap;
}

th.left {
    text-align: left;
}

th.volume {
    padding-top: 8px;
    line-height: 26px;
}

.volume svg {
    display: inline-block;
    margin-right: 13px;
}

.sort {
    display: inline-block;
    width: 18px;
    height: 11px;
    margin-right: 4px;
    vertical-align: 2px;
}

td {
    height: 80px;
    padding: 0 13px;
    text-align: right;
    white-space: nowrap;
}

.tall-row td {
    height: 100px;
}

.selected {
    background: #dfeef7;
}

.even {
    background: #ebf1fa;
}

.key {
    padding: 0 25px 0 2px;
}

/* lets the blue marker fill the row height */
td.key div {
    position: relative;
    display: flex;
    align-items: center;
    height: 80px;
    padding-left: 36px;
    text-align: left;
}

.tall-row td.key div {
    height: 100px;
}

td.key div::before {
    content: "";
    position: absolute;
    left: 0;
    top: 14px;
    bottom: 14px;
    width: 6px;
    border-radius: 3px;
    background: var(--blue);
}

th.key div {
    display: flex;
    align-items: center;
    gap: 13px;
    padding-left: 36px;
}

.key .chev {
    margin: 0 24px 0 34px;
}

.name {
    width: 240px;
    white-space: normal;
}

tr:last-child .name {
    width: auto;
}

.tick {
    appearance: none;
    display: flex;
    align-items: center;
    justify-content: center;
    width: 30px;
    height: 28px;
    border: 1px solid #7d9590;
    border-radius: 6px;
    background: #fff;
}

.tick:checked {
    border-color: #3f74dd;
    background: #3f74dd;
}

.tick:checked::before {
    content: "";
    width: 8px;
    height: 15px;
    margin-bottom: 4px;
    border: solid #fff;
    border-width: 0 3px 3px 0;
    transform: rotate(40deg);
}

.count {
    width: 36px;
    border: 1px solid #7d9590;
    border-radius: 6px;
    background: #f6f6f4;
    font-size: 22px;
    font-weight: 500;
    line-height: 34px;
    text-align: center;
}

td .count {
    margin-left: 74px;
}

.link {
    width: 34px;
    height: 18px;
    margin-left: auto;
    color: #84928f;
    stroke-width: 3;
}

.icons {
    display: flex;
    gap: 20px;
    padding-left: 6px;
    color: #4a7fe6;
}

.icons.red {
    color: var(--red);
}

.icons svg {
    width: 28px;
    height: 28px;
}

.icons .muted {
    color: #84928f;
}

.chips {
    display: flex;
    align-items: center;
    justify-content: flex-end;
    gap: 7px;
}

.chips i {
    width: 41px;
    border: 1px solid #c3c6d0;
    border-radius: 8px;
    color: #b9bcc8;
    font-size: 22px;
    font-style: normal;
    font-weight: 600;
    line-height: 38px;
    text-align: center;
}

.chips svg {
    width: 22px;
    height: 18px;
}

.chips .c {
    border-color: var(--amber);
    background: #f0ece4;
    color: #eda93a;
}

.chips .t {
    border-color: #f08a78;
    background: #f0e6e2;
    color: #ee7a68;
}

.kd {
    display: inline-block;
    width: 81px;
    border-radius: 14px;
    background: var(--amber);
    color: #fff;
    line-height: 39px;
    text-align: center;
}

.dash,
.vol {
    padding-right: 25px;
}

/* bulk actions */
.bulk {
    display: flex;
    align-items: center;
    width: max-content;
    height: 98px;
    margin: 0 auto;
    padding: 0 31px 0 29px;
    gap: 12px;
    border-radius: 49px;
    background: var(--blue);
    box-shadow: 0 10px 40px rgba(0, 0, 0, 0.35);
    color: #fff;
}

.bulk button {
    height: 60px;
    padding: 0 20px;
    border: 1px solid #fff;
    border-radius: 6px;
}

.bulk .clear {
    padding: 0;
    border: none;
}

.bulk .off {
    border-color: #b4bfce;
    color: #b4bfce;
}

.bulk .caret {
    width: 14px;
    margin-left: 14px;
}

.bulk .trash {
    border-color: var(--red);
    background: var(--red);
}

.picked {
    width: 26px;
    border-radius: 6px;
    background: #fff;
    color: var(--text);
    font-size: 22px;
    font-weight: 700;
    line-height: 39px;
    text-align: center;
}

.label {
    margin: 0 8px 0 -6px;
}

/* modal */
.overlay {
    position: fixed;
    inset: 0;
    display: flex;
    align-items: flex-start;
    justify-content: center;
    padding: 637px 0 0 22px;
    background: rgba(48, 51, 48, 0.58);
}

.modal {
    width: 900px;
    padding: 27px 30px 30px;
    border-radius: 14px;
    background: #fff;
    box-shadow: 0 8px 48px rgba(0, 0, 0, 0.35);
}

.modal-head {
    display: flex;
    align-items: flex-start;
    justify-content: space-between;
    padding-right: 5px;
}

h1 {
    font-size: 32px;
    line-height: 56px;
}

.close {
    padding-top: 7px;
    color: #77787c;
}

.modal-body {
    margin: 61px 38px 0;
    padding-bottom: 26px;
    border-bottom: 2px solid #ebebeb;
}

.field {
    display: flex;
    justify-content: space-between;
    line-height: 42px;
    margin-bottom: 10px;
}

.num {
    align-self: center;
    width: 26px;
    border-radius: 6px;
    background: #70747c;
    color: #fff;
    font-size: 20px;
    font-weight: 700;
    line-height: 39px;
    text-align: center;
}

.select {
    display: flex;
    align-items: center;
}

.select select {
    appearance: none;
    flex: 1;
    height: 58px;
    padding: 0 20px;
    border: 2px solid #ebebeb;
    border-radius: 14px;
    background: #fff;
    font-weight: 500;
}

.select .chev {
    margin-left: -36px;
    margin-right: 16px;
    pointer-events: none;
}

/* red frame round the units box */
.highlight {
    margin: 3px 12px 0 14px;
    padding: 17px 21px 9px 18px;
    border: 6px solid #ea4025;
    border-radius: 44px;
}

.units {
    padding: 30px 25px 27px;
    border: 3px solid #ebebeb;
    border-radius: 8px;
}

.progress {
    height: 14px;
    overflow: hidden;
    border-radius: 7px;
    background: #e8e8e8;
}

.progress div {
    height: 100%;
    background: #3b7df0;
}

.units-text {
    display: flex;
    gap: 32px;
    margin-top: 15px;
    color: #70747c;
    white-space: nowrap;
}

.units-text em {
    color: #f5b955;
    font-style: normal;
}

.modal-foot {
    display: flex;
    align-items: center;
    justify-content: flex-end;
    gap: 44px;
    margin-top: 50px;
}

.cancel {
    padding-bottom: 4px;
}

.run {
    height: 59px;
    padding: 0 21px;
    border-radius: 4px;
    background: linear-gradient(#458af8, #357bf6);
    color: #fff;
}
```
